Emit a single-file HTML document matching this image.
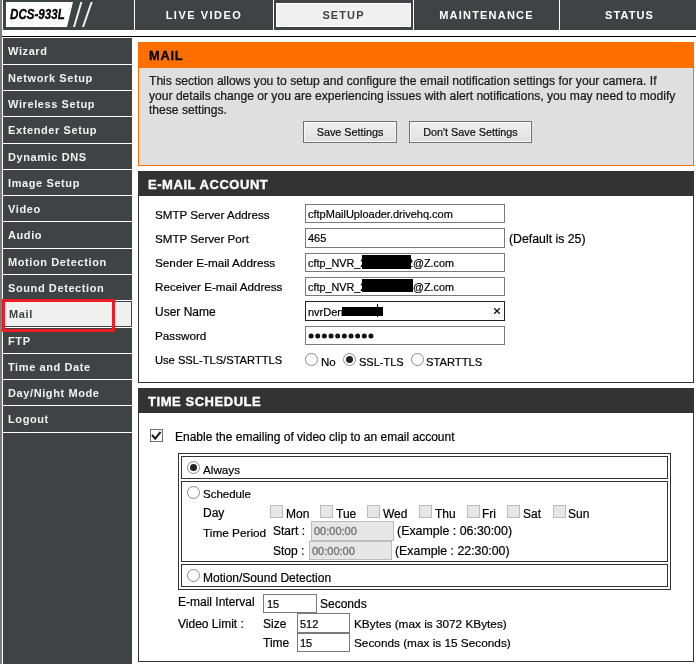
<!DOCTYPE html>
<html><head><meta charset="utf-8">
<style>
*{margin:0;padding:0;box-sizing:border-box}
html,body{width:696px;height:664px;overflow:hidden;background:#fff;font-family:"Liberation Sans",sans-serif;position:relative}
.a{position:absolute}
.t{position:absolute;white-space:nowrap;font-size:12px;line-height:14px;color:#000;-webkit-text-stroke:0.2px #000}
.nav{position:absolute;left:3px;width:129px;background:#404343;color:#f2f2f2;font-weight:bold;font-size:11px;letter-spacing:0.6px;line-height:14px}
.nav span{position:absolute;left:5px}
.tab{position:absolute;top:0;height:30px;color:#fff;font-weight:bold;font-size:11px;text-align:center;line-height:14px}
.tab span{position:absolute;left:0;right:0;top:8px}
.inp{position:absolute;height:19px;border:1px solid #7a7a7a;background:#fff}
.btn{position:absolute;height:22px;border:1px solid #707070;box-shadow:inset 0 0 0 1px #f8f8f8;background:linear-gradient(#efefef,#e0e0e0)}
.radio{position:absolute;width:13px;height:13px;border-radius:50%;border:1px solid #8a8a8a;background:#fff}
.radio.on::after{content:"";position:absolute;left:2px;top:2px;width:7px;height:7px;border-radius:50%;background:#222}
.cb{position:absolute;width:13px;height:13px;border:1px solid #bcbcbc;background:#e6e6e6}
.title{position:absolute;left:138px;width:556px;height:25px;background:#333;color:#fff;font-weight:bold;font-size:13px;letter-spacing:0.55px;-webkit-text-stroke:0.35px #fff}
.box{position:absolute;left:138px;width:556px;border:1px solid #333;border-top:none;background:#fff}
.cell{position:absolute;left:181px;width:487px;border:1px solid #333}
</style></head><body><div style="position:absolute;left:0;top:0;width:696px;height:664px;will-change:transform">
<!-- left strip -->
<div class="a" style="left:0;top:0;width:2px;height:664px;background:#7d7d7d"></div>
<!-- header -->
<div class="a" style="left:3px;top:0;width:693px;height:30px;background:#404343"></div>
<svg class="a" style="left:0;top:0" width="134" height="30">
  <polygon points="6,2 73,2 67,27 6,27" fill="#fff"/>
  <polygon points="80.4,2 82.4,2 75,27 73,27" fill="#f4f4f4"/>
  <polygon points="90.7,2 92.7,2 84,27 82,27" fill="#f4f4f4"/>
</svg>
<div class="a" style="left:10px;top:6px;font-weight:bold;font-style:italic;font-size:14.5px;line-height:17px;color:#000;-webkit-text-stroke:0.35px #000;transform:scaleX(0.8);transform-origin:0 0;white-space:nowrap">DCS-933L</div>
<div class="a" style="left:6px;top:21px;width:60px;height:5px;overflow:hidden"><div style="position:absolute;left:4px;top:-6px;font-weight:bold;font-style:italic;font-size:14.5px;line-height:17px;color:#f0f0f0;transform:scale(0.8,-0.6);transform-origin:0 50%;white-space:nowrap">DCS-933L</div></div>
<div class="a" style="left:134px;top:0;width:1px;height:30px;background:#fff"></div>
<div class="a" style="left:273px;top:0;width:1px;height:30px;background:#fff"></div>
<div class="a" style="left:413px;top:0;width:1px;height:30px;background:#fff"></div>
<div class="a" style="left:559px;top:0;width:1px;height:30px;background:#fff"></div>
<div class="tab" style="left:135px;width:138px;letter-spacing:1.5px"><span>LIVE VIDEO</span></div>
<div class="a" style="left:276px;top:3px;width:135px;height:24px;border:1px solid #fff;background:#f0f0f0"></div>
<div class="tab" style="left:274px;width:139px;color:#404343;letter-spacing:1.1px"><span>SETUP</span></div>
<div class="tab" style="left:414px;width:145px;letter-spacing:1.2px"><span>MAINTENANCE</span></div>
<div class="tab" style="left:560px;width:139px;letter-spacing:1.1px"><span>STATUS</span></div>
<div class="a" style="left:2px;top:36px;width:694px;height:1px;background:#000"></div>

<!-- sidebar -->

<div class="nav" style="top:38px;height:26px"><span style="top:6px">Wizard</span></div>
<div class="nav" style="top:65px;height:25px"><span style="top:6px">Network Setup</span></div>
<div class="nav" style="top:91px;height:25px"><span style="top:6px">Wireless Setup</span></div>
<div class="nav" style="top:117px;height:26px"><span style="top:6px">Extender Setup</span></div>
<div class="nav" style="top:144px;height:25px"><span style="top:6px">Dynamic DNS</span></div>
<div class="nav" style="top:170px;height:25px"><span style="top:6px">Image Setup</span></div>
<div class="nav" style="top:196px;height:25px"><span style="top:6px">Video</span></div>
<div class="nav" style="top:222px;height:26px"><span style="top:6px">Audio</span></div>
<div class="nav" style="top:249px;height:25px"><span style="top:6px">Motion Detection</span></div>
<div class="nav" style="top:275px;height:25px"><span style="top:6px">Sound Detection</span></div>
<div class="nav" style="top:301px;height:26px;background:#f0f0f0;border:1px solid #404343;color:#404343"><span style="top:5px;left:5px">Mail</span></div>
<div class="nav" style="top:328px;height:25px"><span style="top:6px">FTP</span></div>
<div class="nav" style="top:354px;height:25px"><span style="top:6px">Time and Date</span></div>
<div class="nav" style="top:380px;height:25px"><span style="top:6px">Day/Night Mode</span></div>
<div class="nav" style="top:406px;height:26px"><span style="top:6px">Logout</span></div>
<div class="nav" style="top:433px;height:231px"></div>
<div class="a" style="left:2px;top:299px;width:113px;height:33px;border:3px solid #ed1c24"></div>

<!-- MAIL box -->
<div class="a" style="left:138px;top:42px;width:556px;height:124px;background:#ff6f00"></div>
<div class="a" style="left:139px;top:68px;width:554px;height:97px;background:#dfdfdf"></div>
<div class="t" style="left:149px;top:49px;font-weight:bold;font-size:12.8px;letter-spacing:0.75px;color:#000;-webkit-text-stroke:0.3px #000">MAIL</div>
<div class="t" style="left:149px;top:74px;line-height:14.6px;font-size:12.1px;color:#222">This section allows you to setup and configure the email notification settings for your camera. If<br>your details change or you are experiencing issues with alert notifications, you may need to modify<br>these settings.</div>
<div class="btn" style="left:303px;top:121px;width:94px"></div>
<div class="t" style="left:303px;top:125px;width:94px;text-align:center;font-size:10.8px;color:#111">Save Settings</div>
<div class="btn" style="left:409px;top:121px;width:123px"></div>
<div class="t" style="left:409px;top:125px;width:123px;text-align:center;font-size:10.8px;color:#111">Don't Save Settings</div>

<!-- E-MAIL ACCOUNT -->
<div class="title" style="top:171px"><span class="a" style="left:10px;top:7px;line-height:14px">E-MAIL ACCOUNT</span></div>
<div class="box" style="top:196px;height:187px"></div>
<div class="t" style="left:155px;top:208px;font-size:11.6px">SMTP Server Address</div>
<div class="t" style="left:155px;top:232px;font-size:11.6px">SMTP Server Port</div>
<div class="t" style="left:155px;top:256px;font-size:11.75px">Sender E-mail Address</div>
<div class="t" style="left:155px;top:280px;font-size:11.65px">Receiver E-mail Address</div>
<div class="t" style="left:155px;top:305px">User Name</div>
<div class="t" style="left:155px;top:329px;font-size:11.7px">Password</div>
<div class="t" style="left:155px;top:353px;font-size:11.15px">Use SSL-TLS/STARTTLS</div>

<div class="inp" style="left:305px;top:204px;width:200px"></div>
<div class="t" style="left:308px;top:207px;font-size:11px">cftpMailUploader.drivehq.com</div>
<div class="inp" style="left:305px;top:228px;width:200px;height:20px"></div>
<div class="t" style="left:308px;top:231px;font-size:11px">465</div>
<div class="t" style="left:509px;top:232px;font-size:12.3px">(Default is 25)</div>
<div class="inp" style="left:305px;top:253px;width:200px"></div>
<div class="t" style="left:308px;top:256px;font-size:10.8px">cftp_NVR_2</div><div class="t" style="left:407px;top:256px;font-size:10.8px">2@Z.com</div>
<div class="a" style="left:362px;top:255px;width:49px;height:14px;background:#000"></div>
<div class="inp" style="left:305px;top:277px;width:200px"></div>
<div class="t" style="left:308px;top:280px;font-size:10.8px">cftp_NVR_2</div><div class="t" style="left:413px;top:280px;font-size:10.8px">@Z.com</div>
<div class="a" style="left:362px;top:279px;width:51px;height:13px;background:#000"></div>
<div class="inp" style="left:305px;top:301px;width:200px;height:20px;border-color:#222"></div>
<div class="t" style="left:308px;top:305px;font-size:11px">nvrDen</div>
<div class="a" style="left:342px;top:307px;width:41px;height:9px;background:#000"></div>
<div class="a" style="left:377px;top:304px;width:1px;height:13px;background:#000"></div>
<svg class="a" style="left:492px;top:306px" width="10" height="10"><path d="M2.2 2.2 L7.8 7.8 M7.8 2.2 L2.2 7.8" stroke="#111" stroke-width="1.3"/></svg>
<div class="inp" style="left:305px;top:326px;width:200px"></div>
<svg class="a" style="left:308px;top:333px" width="70" height="7"><circle cx="3.10" cy="3" r="2.5" fill="#111"/><circle cx="9.75" cy="3" r="2.5" fill="#111"/><circle cx="16.40" cy="3" r="2.5" fill="#111"/><circle cx="23.05" cy="3" r="2.5" fill="#111"/><circle cx="29.70" cy="3" r="2.5" fill="#111"/><circle cx="36.35" cy="3" r="2.5" fill="#111"/><circle cx="43.00" cy="3" r="2.5" fill="#111"/><circle cx="49.65" cy="3" r="2.5" fill="#111"/><circle cx="56.30" cy="3" r="2.5" fill="#111"/><circle cx="62.95" cy="3" r="2.5" fill="#111"/></svg>
<div class="radio" style="left:305px;top:353px"></div>
<div class="t" style="left:321px;top:355px;font-size:11.5px">No</div>
<div class="radio on" style="left:343px;top:353px"></div>
<div class="t" style="left:359px;top:355px;font-size:11px">SSL-TLS</div>
<div class="radio" style="left:411px;top:353px"></div>
<div class="t" style="left:426px;top:355px;font-size:11.2px">STARTTLS</div>

<!-- TIME SCHEDULE -->
<div class="title" style="top:388px"><span class="a" style="left:10px;top:7px;line-height:14px">TIME SCHEDULE</span></div>
<div class="box" style="top:413px;height:249px"></div>
<div class="a" style="left:150px;top:429px;width:13px;height:13px;border:1px solid #707070;background:#fff"></div>
<svg class="a" style="left:150px;top:429px" width="13" height="13"><path d="M2 6 L5.2 9.6 L10.6 2.8" stroke="#1a1a1a" stroke-width="2" fill="none"/></svg>
<div class="t" style="left:175px;top:430px">Enable the emailing of video clip to an email account</div>

<div class="a" style="left:178px;top:453px;width:493px;height:137px;border:1px solid #333"></div>
<div class="cell" style="top:456px;height:23px"></div>
<div class="cell" style="top:481px;height:81px"></div>
<div class="cell" style="top:564px;height:23px"></div>
<div class="radio on" style="left:187px;top:461px"></div>
<div class="t" style="left:203px;top:463px;font-size:11.7px">Always</div>
<div class="radio" style="left:187px;top:486px"></div>
<div class="t" style="left:203px;top:487px;font-size:11.5px">Schedule</div>
<div class="t" style="left:203px;top:506px">Day</div>
<div class="t" style="left:203px;top:526px;font-size:11.8px">Time Period</div>
<div class="cb" style="left:270px;top:505px"></div><div class="t" style="left:286px;top:507px">Mon</div>
<div class="cb" style="left:320px;top:505px"></div><div class="t" style="left:336px;top:507px">Tue</div>
<div class="cb" style="left:367px;top:505px"></div><div class="t" style="left:383px;top:507px">Wed</div>
<div class="cb" style="left:419px;top:505px"></div><div class="t" style="left:435px;top:507px">Thu</div>
<div class="cb" style="left:467px;top:505px"></div><div class="t" style="left:482px;top:507px">Fri</div>
<div class="cb" style="left:507px;top:505px"></div><div class="t" style="left:523px;top:507px">Sat</div>
<div class="cb" style="left:553px;top:505px"></div><div class="t" style="left:568px;top:507px">Sun</div>
<div class="t" style="left:273px;top:524px">Start :</div>
<div class="a" style="left:311px;top:521px;width:83px;height:20px;border:1px solid #bcbcbc;background:#e6e6e6"></div>
<div class="t" style="left:314px;top:524px;color:#7a7a7a;-webkit-text-stroke:0.45px #7a7a7a;font-size:11px">00:00:00</div>
<div class="t" style="left:397px;top:524px;font-size:12.4px">(Example : 06:30:00)</div>
<div class="t" style="left:273px;top:544px">Stop :</div>
<div class="a" style="left:309px;top:541px;width:83px;height:19px;border:1px solid #bcbcbc;background:#e6e6e6"></div>
<div class="t" style="left:312px;top:544px;color:#7a7a7a;-webkit-text-stroke:0.45px #7a7a7a;font-size:11px">00:00:00</div>
<div class="t" style="left:395px;top:544px;font-size:12.35px">(Example : 22:30:00)</div>
<div class="radio" style="left:187px;top:569px"></div>
<div class="t" style="left:203px;top:571px">Motion/Sound Detection</div>

<div class="t" style="left:178px;top:595px">E-mail Interval</div>
<div class="inp" style="left:263px;top:594px;width:54px"></div>
<div class="t" style="left:267px;top:597px;font-size:11px">15</div>
<div class="t" style="left:320px;top:597px">Seconds</div>
<div class="t" style="left:178px;top:617px">Video Limit :</div>
<div class="t" style="left:263px;top:617px">Size</div>
<div class="inp" style="left:297px;top:613px;width:53px;height:20px"></div>
<div class="t" style="left:300px;top:617px;font-size:11px">512</div>
<div class="t" style="left:354px;top:617px;font-size:11.8px">KBytes (max is 3072 KBytes)</div>
<div class="t" style="left:263px;top:636px">Time</div>
<div class="inp" style="left:297px;top:633px;width:53px"></div>
<div class="t" style="left:300px;top:636px;font-size:11px">15</div>
<div class="t" style="left:354px;top:636px;font-size:11.8px">Seconds (max is 15 Seconds)</div>
</div></body></html>
